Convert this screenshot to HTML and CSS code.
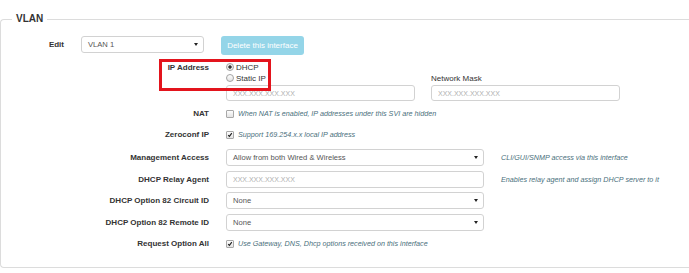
FILE: index.html
```html
<!DOCTYPE html>
<html lang="en">
<head>
    <meta charset="UTF-8">
    <meta name="viewport" content="width=device-width, initial-scale=1.0">
    <title>VLAN</title>
    <link rel="stylesheet" href="styles.css">
</head>
<body>
    <fieldset class="panel">
        <legend>VLAN</legend>

        <div class="edit-row">
            <label class="edit-label">Edit</label>
            <div class="select edit-select"><span>VLAN 1</span><i class="caret"></i></div>
            <button class="btn-delete" disabled>Delete this interface</button>
        </div>

        <div class="form-rows">
            <div class="row ip-row">
                <span class="highlight"></span>
                <label class="row-label">IP Address</label>
                <div class="ip-fields">
                    <div class="ip-col">
                        <label class="radio"><span class="radio-dot on"></span>DHCP</label>
                        <label class="radio"><span class="radio-dot"></span>Static IP</label>
                        <input class="text-input" type="text" placeholder="XXX.XXX.XXX.XXX">
                    </div>
                    <div class="ip-col">
                        <span class="field-title">Network Mask</span>
                        <input class="text-input" type="text" placeholder="XXX.XXX.XXX.XXX">
                    </div>
                </div>
            </div>

            <div class="row">
                <label class="row-label">NAT</label>
                <div class="check-line">
                    <span class="check"></span>
                    <span class="help">When NAT is enabled, IP addresses under this SVI are hidden</span>
                </div>
            </div>

            <div class="row">
                <label class="row-label">Zeroconf IP</label>
                <div class="check-line">
                    <span class="check"><svg viewBox="0 0 8 8"><path d="M1.6 4.2 L3.2 5.9 L6.4 1.6"/></svg></span>
                    <span class="help">Support 169.254.x.x local IP address</span>
                </div>
            </div>

            <div class="select-rows">
                <div class="row wide">
                    <label class="row-label">Management Access</label>
                    <div class="select"><span>Allow from both Wired &amp; Wireless</span><i class="caret"></i></div>
                    <span class="help">CLI/GUI/SNMP access via this interface</span>
                </div>

                <div class="row wide">
                    <label class="row-label">DHCP Relay Agent</label>
                    <input class="text-input" type="text" placeholder="XXX.XXX.XXX.XXX">
                    <span class="help">Enables relay agent and assign DHCP server to it</span>
                </div>

                <div class="row wide">
                    <label class="row-label">DHCP Option 82 Circuit ID</label>
                    <div class="select"><span>None</span><i class="caret"></i></div>
                </div>

                <div class="row wide">
                    <label class="row-label">DHCP Option 82 Remote ID</label>
                    <div class="select"><span>None</span><i class="caret"></i></div>
                </div>
            </div>

            <div class="row">
                <label class="row-label">Request Option All</label>
                <div class="check-line">
                    <span class="check"><svg viewBox="0 0 8 8"><path d="M1.6 4.2 L3.2 5.9 L6.4 1.6"/></svg></span>
                    <span class="help">Use Gateway, DNS, Dhcp options received on this interface</span>
                </div>
            </div>
        </div>
    </fieldset>
</body>
</html>
```

FILE: styles.css
```css
body {
    margin: 0;
    overflow: hidden;
    background-color: #fff;
    font-family: "Liberation Sans", Arial, sans-serif;
    color: #333;
}

/* the panel runs on past the right edge of the shot, so no right border */
.panel {
    margin: 13px 0 0 0;
    padding: 11px 0 15px 0;
    border: 1px solid #dcdcdc;
    border-right: none;
    border-radius: 4px 0 0 4px;
}

.panel legend {
    margin-left: 11px;
    padding: 0 4px;
    font-size: 10px;
    line-height: 12px;
    font-weight: bold;
    color: #333;
}

/* top row: edit select + delete button */
.edit-row {
    display: flex;
    align-items: flex-start;
}

.edit-label {
    width: 63px;
    margin-right: 17px;
    text-align: right;
    font-size: 8px;
    font-weight: bold;
    line-height: 17px;
}

.edit-select {
    width: 123px;
    margin-right: 17px;
}

.btn-delete {
    width: 83px;
    height: 19px;
    padding: 0;
    border: none;
    border-radius: 3px;
    background-color: #94d5e8;
    color: #fff;
    font-family: inherit;
    font-size: 8px;
}

.select {
    display: flex;
    align-items: center;
    justify-content: space-between;
    box-sizing: border-box;
    height: 17px;
    padding: 0 5px 0 6px;
    border: 1px solid #d2d2d2;
    border-radius: 3px;
    background-color: #fff;
    color: #555;
    font-size: 7.6px;
}

.caret {
    width: 0;
    height: 0;
    border-left: 2.5px solid transparent;
    border-right: 2.5px solid transparent;
    border-top: 3.5px solid #222;
}

/* form rows */
.form-rows {
    display: flex;
    flex-direction: column;
    gap: 4px;
}

.select-rows {
    display: flex;
    flex-direction: column;
    gap: 4.7px;
    margin-top: 2px;
}

.row {
    display: grid;
    grid-template-columns: 208px auto;
    column-gap: 17px;
    align-items: center;
    min-height: 17px;
}

.row.wide {
    grid-template-columns: 208px 258px auto;
    column-gap: 17px;
}

.row-label {
    text-align: right;
    font-size: 8px;
    font-weight: bold;
    color: #333;
}

.ip-row {
    position: relative;
    align-items: start;
    margin-top: 6.5px;
}

.ip-row .row-label {
    line-height: 11px;
}

.highlight {
    position: absolute;
    left: 158px;
    top: -2.5px;
    width: 112px;
    height: 32px;
    box-sizing: border-box;
    border: 3px solid #e3141d;
}

.ip-fields {
    display: flex;
    align-items: flex-end;
    gap: 16px;
}

.ip-col {
    display: flex;
    flex-direction: column;
    width: 189px;
}

.radio {
    display: flex;
    align-items: center;
    height: 11px;
    font-size: 8px;
    color: #333;
}

.radio-dot {
    display: inline-block;
    width: 6px;
    height: 6px;
    margin-right: 2px;
    border: 1px solid #a3a3a3;
    border-radius: 50%;
    background: linear-gradient(#fff, #e2e2e2);
}

.radio-dot.on {
    background: radial-gradient(circle, #333 0, #333 1.4px, #eee 1.9px);
}

.field-title {
    font-size: 8px;
    line-height: 11px;
    color: #333;
}

.text-input {
    box-sizing: border-box;
    width: 189px;
    height: 16px;
    margin: 1.5px 0 0 0;
    padding: 0 6px;
    border: 1px solid #d2d2d2;
    border-radius: 3px;
    font-family: inherit;
    font-size: 7px;
    outline: none;
}

.row.wide .text-input {
    width: 258px;
    height: 17px;
    margin: 0;
}

.text-input::placeholder {
    color: #b0b0b0;
}

.check-line {
    display: flex;
    align-items: center;
}

.check {
    display: inline-flex;
    box-sizing: border-box;
    width: 8px;
    height: 8px;
    margin-right: 4px;
    border: 1px solid #a8a8a8;
    border-radius: 1px;
    background: linear-gradient(#fdfdfd, #e3e3e3);
}

.check svg {
    width: 100%;
    height: 100%;
    overflow: visible;
}

.check path {
    fill: none;
    stroke: #1e1e1e;
    stroke-width: 1.5;
}

.help {
    font-size: 7.2px;
    font-style: italic;
    color: #4a707c;
}
```
